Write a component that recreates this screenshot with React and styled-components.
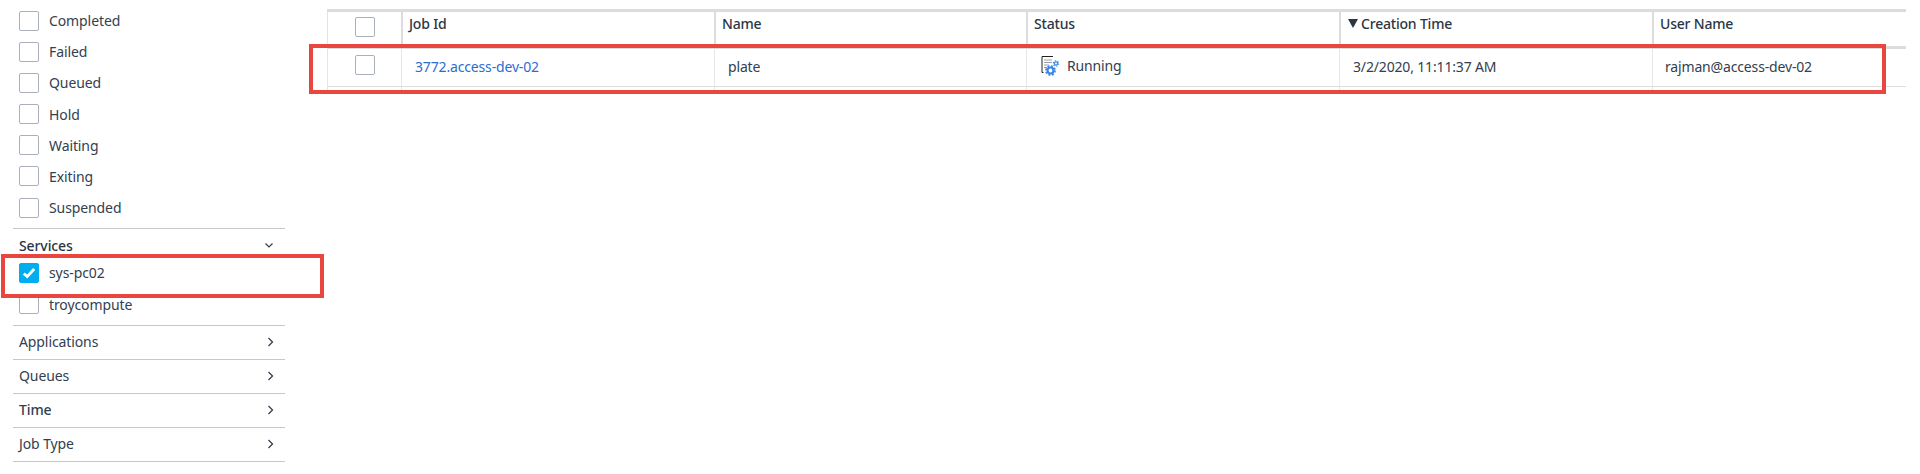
import React from "react";
import styled, { createGlobalStyle } from "styled-components";

const Global = createGlobalStyle`
  html, body { margin: 0; padding: 0; background: #fff; }
  body { font-family: "Noto Sans", "Open Sans", sans-serif; font-size: 14px; letter-spacing: -0.1px; color: #33404f; }
`;

const Page = styled.div`
  position: relative;
  display: flex;
  width: 1920px;
  height: 474px;
  overflow: hidden;
`;

const Sidebar = styled.aside`
  flex: none;
  width: 272px;
  margin-left: 13px;
  padding-top: 5px;
`;

const OptionRow = styled.label`
  display: flex;
  align-items: center;
  height: 31.17px;
  padding-left: 6px;
  gap: 10px;
`;

const Box = styled.span`
  flex: none;
  box-sizing: border-box;
  display: flex;
  align-items: center;
  justify-content: center;
  width: 20px;
  height: 20px;
  border: 1px solid ${(p) => (p.$checked ? "#00aeef" : "#aab0bb")};
  border-radius: 2px;
  background: ${(p) => (p.$checked ? "#00aeef" : "#fff")};
`;

const Section = styled.div`
  border-top: 1px solid #c8c8c8;
  margin-top: 5px;
  padding-bottom: 5.3px;
`;

const SectionHead = styled.div`
  display: flex;
  align-items: center;
  justify-content: space-between;
  height: 25.2px;
  padding: 1px 11px 0 6px;
  box-sizing: border-box;
  font-weight: 500;
  color: #2b3645;
  margin-top: 3px;
`;

const Collapsed = styled.div`
  display: flex;
  align-items: center;
  justify-content: space-between;
  box-sizing: border-box;
  height: 34px;
  padding: 0 11px 2px 6px;
  border-top: 1px solid #c8c8c8;
  font-weight: ${(p) => (p.$bold ? 500 : 400)};
  &:last-child { border-bottom: 1px solid #c8c8c8; height: 35px; }
  svg { margin-top: 2px; }
`;

const Main = styled.main`
  flex: none;
  width: 1579px;
  margin-left: 42px;
  padding-top: 9px;
`;

const Table = styled.div`
  display: grid;
  grid-template-columns: 74px 313px 312px 313px 313px 254px;
  border-top: 3px solid #dcdcdc;
`;

const HeadCell = styled.div`
  box-sizing: border-box;
  display: flex;
  align-items: center;
  height: 37px;
  padding: 0 0 ${(p) => (p.$center ? 4 : 12)}px ${(p) => (p.$center ? 0 : p.$pad ?? 6)}px;
  border-left: ${(p) => (p.$first ? "1px solid #e4e4e4" : "2px solid #dcdcdc")};
  border-bottom: 3px solid #dcdcdc;
  font-weight: 500;
  letter-spacing: -0.2px;
  color: #2b3645;
  justify-content: ${(p) => (p.$center ? "center" : "flex-start")};
`;

const BodyCell = styled.div`
  box-sizing: border-box;
  display: flex;
  align-items: center;
  height: 38px;
  padding: 0 0 ${(p) => (p.$center ? 5 : 2)}px ${(p) => (p.$center ? 0 : p.$pad ?? 13)}px;
  border-left: 1px solid #e6e6e6;
  border-bottom: 1px solid #dedede;
  letter-spacing: -0.16px;
  justify-content: ${(p) => (p.$center ? "center" : "flex-start")};
`;

const StubCell = styled.div`
  height: 4px;
  border-left: 1px solid #e6e6e6;
`;

const JobLink = styled.a`
  color: #2d6cd2;
  text-decoration: none;
`;

const SortArrow = styled.span`
  width: 0;
  height: 0;
  margin: 0 3px 0 0;
  border-left: 5px solid transparent;
  border-right: 5px solid transparent;
  border-top: 9px solid #2b3645;
`;

const StatusWrap = styled.span`
  display: flex;
  align-items: center;
  gap: 8px;
  margin-top: -2px;
`;

const Highlight = styled.div`
  position: absolute;
  box-sizing: border-box;
  border: 4px solid #e8463f;
  left: ${(p) => p.$x}px;
  top: ${(p) => p.$y}px;
  width: ${(p) => p.$w}px;
  height: ${(p) => p.$h}px;
`;

const Check = () => (
  <svg width="14" height="12" viewBox="0 0 14 12">
    <path d="M1.8 6.4 5.2 9.6 12.2 2" fill="none" stroke="#fff" strokeWidth="2.8" />
  </svg>
);

const ChevronDown = () => (
  <svg width="10" height="7" viewBox="0 0 10 7">
    <path d="M1.5 1.5 5 5l3.5-3.5" fill="none" stroke="#33404f" strokeWidth="1.2" />
  </svg>
);

const ChevronRight = () => (
  <svg width="7" height="10" viewBox="0 0 7 10">
    <path d="M1.5 1 5.5 5l-4 4" fill="none" stroke="#33404f" strokeWidth="1.3" />
  </svg>
);

const RunningIcon = () => (
  <svg width="18" height="20" viewBox="0 0 18 20">
    <path d="M12 .5H1v16H2.5" fill="none" stroke="#222" strokeWidth="1" />
    <path d="M3 4h8M3 6.5h8M3 9h5M3 11.5h3" stroke="#9aa0a8" strokeWidth="1" />
    <circle cx="9.5" cy="14.5" r="3" fill="none" stroke="#3b86e8" strokeWidth="2.2" />
    <circle cx="9.5" cy="14.5" r="4.6" fill="none" stroke="#3b86e8" strokeWidth="1.6" strokeDasharray="2 1.6" />
    <circle cx="15" cy="7.5" r="1.6" fill="none" stroke="#3b86e8" strokeWidth="1.2" />
    <circle cx="15" cy="7.5" r="2.7" fill="none" stroke="#3b86e8" strokeWidth="1.1" strokeDasharray="1.4 1.4" />
  </svg>
);

const statuses = ["Completed", "Failed", "Queued", "Hold", "Waiting", "Exiting", "Suspended"];

export default function App() {
  return (
    <Page>
      <Global />
      <Sidebar>
        {statuses.map((s) => (
          <OptionRow key={s}>
            <Box />
            {s}
          </OptionRow>
        ))}
        <Section>
          <SectionHead>
            Services
            <ChevronDown />
          </SectionHead>
          <OptionRow>
            <Box $checked>
              <Check />
            </Box>
            sys-pc02
          </OptionRow>
          <OptionRow>
            <Box />
            troycompute
          </OptionRow>
        </Section>
        <Collapsed>
          Applications
          <ChevronRight />
        </Collapsed>
        <Collapsed>
          Queues
          <ChevronRight />
        </Collapsed>
        <Collapsed $bold>
          Time
          <ChevronRight />
        </Collapsed>
        <Collapsed>
          Job Type
          <ChevronRight />
        </Collapsed>
      </Sidebar>
      <Main>
        <Table>
          <HeadCell $first $center>
            <Box />
          </HeadCell>
          <HeadCell>Job Id</HeadCell>
          <HeadCell>Name</HeadCell>
          <HeadCell>Status</HeadCell>
          <HeadCell $pad={7}>
            <SortArrow />
            Creation Time
          </HeadCell>
          <HeadCell>User Name</HeadCell>

          <BodyCell $center>
            <Box />
          </BodyCell>
          <BodyCell>
            <JobLink href="#">3772.access-dev-02</JobLink>
          </BodyCell>
          <BodyCell>plate</BodyCell>
          <BodyCell $pad={14}>
            <StatusWrap>
              <RunningIcon />
              Running
            </StatusWrap>
          </BodyCell>
          <BodyCell>3/2/2020, 11:11:37 AM</BodyCell>
          <BodyCell $pad={12}>rajman@access-dev-02</BodyCell>

          <StubCell />
          <StubCell />
          <StubCell />
          <StubCell />
          <StubCell />
          <StubCell />
        </Table>
      </Main>
      <Highlight $x={1} $y={254} $w={323} $h={44} />
      <Highlight $x={309} $y={44} $w={1577} $h={50} />
    </Page>
  );
}
